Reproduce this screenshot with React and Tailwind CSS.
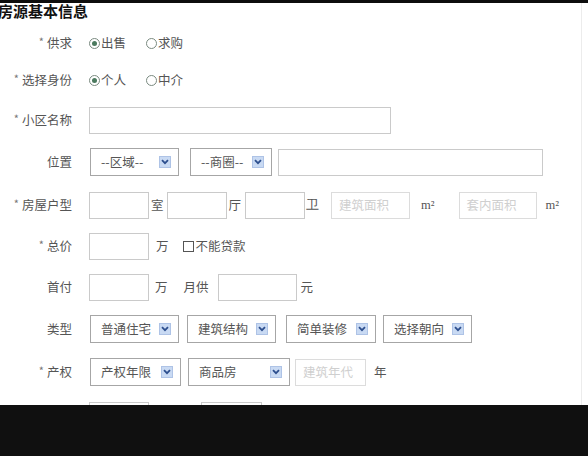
import React from "react";

const Label = ({ star, children }) => (
  <div className="w-[72px] shrink-0 text-right text-[12.5px] text-[#555] mr-[17px] leading-none">
    {star && <span className="text-[#777] text-[11px] mr-[3px] relative -top-[2px]">*</span>}
    {children}
  </div>
);

const Row = ({ className = "", children }) => (
  <div className={`flex items-center h-[28px] ${className}`}>{children}</div>
);

const Radio = ({ checked, children, className = "" }) => (
  <div className={`flex items-center text-[12.5px] text-[#555] ${className}`}>
    <span className="w-[11px] h-[11px] rounded-full border border-[#7a8a80] flex items-center justify-center mr-[1px]">
      {checked && <span className="w-[5px] h-[5px] rounded-full bg-[#4b7a5e]" />}
    </span>
    {children}
  </div>
);

const Box = ({ w, placeholder, className = "" }) => (
  <div
    className={`h-[27px] border bg-white shrink-0 flex items-center pl-[7px] text-[12.5px] ${
      placeholder ? "border-[#dcdcdc] text-[#cfcfcf]" : "border-[#cacaca]"
    } ${className}`}
    style={{ width: w }}
  >
    {placeholder}
  </div>
);

const Arrow = () => (
  <span className="w-[12px] h-[12px] bg-[#c9daf3] border border-[#aec3e6] flex items-center justify-center">
    <svg width="8" height="6" viewBox="0 0 8 6">
      <path d="M1 1.2 L4 4.2 L7 1.2" fill="none" stroke="#2d4f8e" strokeWidth="1.8" />
    </svg>
  </span>
);

const Select = ({ w, text, className = "" }) => (
  <div
    className={`h-[28px] border border-[#a6a6a6] bg-white shrink-0 flex items-center justify-between pl-[10px] pr-[7px] text-[12.5px] text-[#555] ${className}`}
    style={{ width: w }}
  >
    <span>{text}</span>
    <Arrow />
  </div>
);

const Unit = ({ children, className = "" }) => (
  <span className={`text-[12.5px] text-[#555] ${className}`}>{children}</span>
);

export default function App() {
  return (
    <div className="w-[588px] h-[456px] flex flex-col bg-white overflow-hidden font-['Noto_Sans_CJK_SC',sans-serif]">
      <div className="h-[3px] bg-[#0d0d0d] shrink-0" />
      <div className="h-[402px] shrink-0 overflow-hidden w-[582px] border-r border-[#ececec]">
        <div className="h-[17px] flex items-center text-[15px] font-bold text-[#111] -ml-[2px]">房源基本信息</div>

        <Row className="mt-[9px]">
          <Label star>供求</Label>
          <Radio checked>出售</Radio>
          <Radio className="ml-[20px]">求购</Radio>
        </Row>

        <Row className="mt-[9px]">
          <Label star>选择身份</Label>
          <Radio checked>个人</Radio>
          <Radio className="ml-[20px]">中介</Radio>
        </Row>

        <Row className="mt-[12px]">
          <Label star>小区名称</Label>
          <Box w={302} />
        </Row>

        <Row className="mt-[14px]">
          <Label>位置</Label>
          <Select w={89} text="--区域--" className="ml-[1px]" />
          <Select w={82} text="--商圈--" className="ml-[11px]" />
          <Box w={265} className="ml-[6px]" />
        </Row>

        <Row className="mt-[15px]">
          <Label star>房屋户型</Label>
          <Box w={60} />
          <Unit className="ml-[2px]">室</Unit>
          <Box w={60} className="ml-[3px]" />
          <Unit className="ml-[2px]">厅</Unit>
          <Box w={60} className="ml-[4px]" />
          <Unit className="ml-[1px] font-['Liberation_Serif',serif]">卫</Unit>
          <Box w={79} placeholder="建筑面积" className="ml-[12px]" />
          <Unit className="ml-[11px] font-['Liberation_Serif',serif]">m²</Unit>
          <Box w={78} placeholder="套内面积" className="ml-[24px]" />
          <Unit className="ml-[9px] font-['Liberation_Serif',serif]">m²</Unit>
        </Row>

        <Row className="mt-[13px]">
          <Label star>总价</Label>
          <Box w={60} />
          <Unit className="ml-[7px]">万</Unit>
          <span className="ml-[14px] w-[11px] h-[11px] border border-[#555] bg-white" />
          <Unit className="ml-[2px]">不能贷款</Unit>
        </Row>

        <Row className="mt-[13px]">
          <Label>首付</Label>
          <Box w={60} />
          <Unit className="ml-[6px]">万</Unit>
          <Unit className="ml-[16px]">月供</Unit>
          <Box w={79} className="ml-[9px]" />
          <Unit className="ml-[4px]">元</Unit>
        </Row>

        <Row className="mt-[14px]">
          <Label>类型</Label>
          <Select w={89} text="普通住宅" className="ml-[1px]" />
          <Select w={89} text="建筑结构" className="ml-[8px]" />
          <Select w={90} text="简单装修" className="ml-[10px]" />
          <Select w={89} text="选择朝向" className="ml-[7px]" />
        </Row>

        <Row className="mt-[15px]">
          <Label star>产权</Label>
          <Select w={91} text="产权年限" className="ml-[1px]" />
          <Select w={102} text="商品房" className="ml-[7px]" />
          <Box w={71} placeholder="建筑年代" className="ml-[5px]" />
          <Unit className="ml-[8px]">年</Unit>
        </Row>

        <Row className="mt-[15px]">
          <Label />
          <Box w={60} />
          <Box w={61} className="ml-[52px]" />
        </Row>
      </div>
      <div className="flex-1 bg-[#101010]" />
    </div>
  );
}
